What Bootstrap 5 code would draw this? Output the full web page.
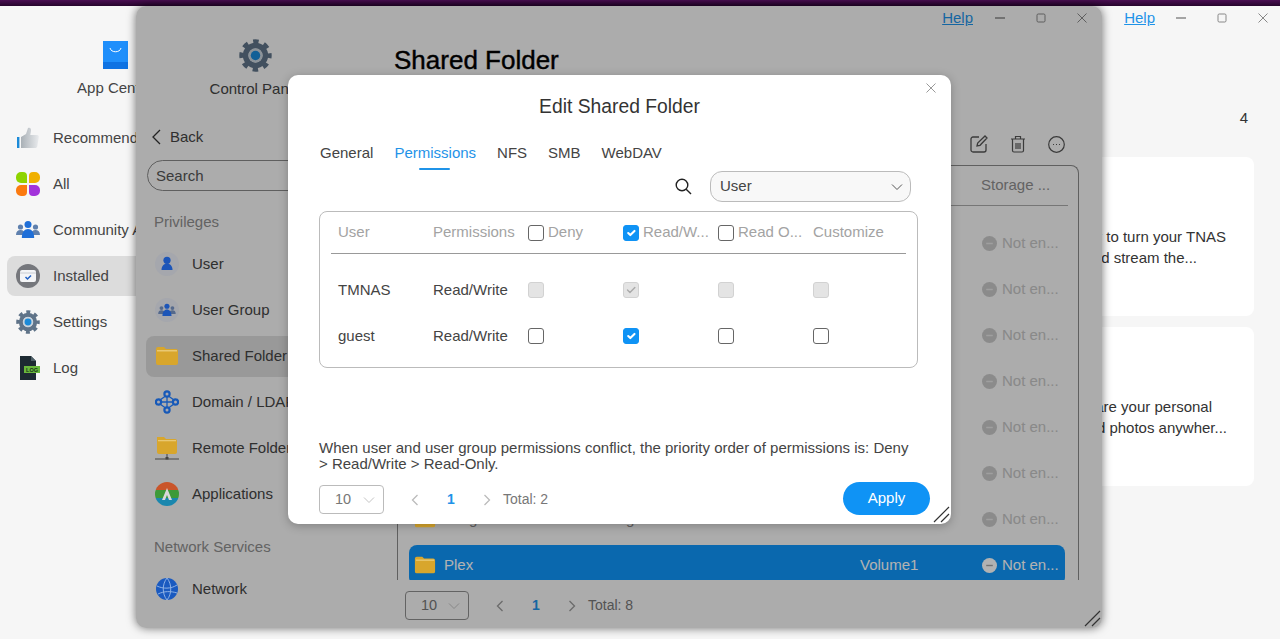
<!DOCTYPE html>
<html lang="en">
<head>
<meta charset="utf-8">
<title>Shared Folder</title>
<link href="https://cdn.jsdelivr.net/npm/bootstrap@5.3.0/dist/css/bootstrap.min.css" rel="stylesheet">
<style>
html,body{height:100%}
body{background:#f6f6f6;overflow:hidden;font-family:"Liberation Sans",Arial,sans-serif;font-size:15px;color:#444}
.top-strip{height:6px;background:linear-gradient(#4a0f52,#26042c)}
.desk-win{position:absolute}
.win-back{left:0;top:6px;width:1280px;height:633px;background:#f6f6f6;border-radius:8px 8px 0 0;overflow:hidden}
.win-front{left:136px;top:6px;width:966px;height:622px;background:#f6f6f6;border-radius:10px;box-shadow:0 0 10px rgba(0,0,0,.55);overflow:hidden}
.win-mask{position:absolute;inset:0;background:rgba(0,0,0,.3);z-index:2}
.ic-lit{position:relative;z-index:3}
.side-back{width:300px;flex:none}
.side-front{width:258px;flex:none}
.head-back{height:109px;padding-top:35px;width:78px;margin-left:76px;gap:9px}
.head-front{height:110px;padding-top:33px;width:90px;margin-left:74px;gap:7px}
.head-back span,.head-front span{white-space:nowrap;line-height:20px}
.ic-store{width:25px;height:28px;flex:none}
.ic-gear{width:33px;height:33px;flex:none}
.nav-item-a{height:40px;margin:3px 0 3px 7px;padding-left:9px;gap:13px;border-radius:8px;white-space:nowrap;color:#444}
.nav-item-b{height:41px;margin:2.5px 0 2.5px 10px;padding-left:9px;gap:13px;border-radius:8px;white-space:nowrap;color:#444;flex:none}
.is-on{background:#dcdcdc}
.ic-24{width:24px;height:24px;flex:none}
.back-row{height:42px;padding-left:16px;gap:9px;color:#444;flex:none}
.search-box{height:31px;width:230px;margin:2px 0 0 11px;border:1px solid #888;border-radius:16px;padding:0 8px;color:#555;background:transparent;line-height:29px;flex:none}
.group-label{height:38px;margin:12px 0 0 18px;line-height:38px;color:#8e8e8e;flex:none}
.group-label.lower{margin-top:11px}
.ctrl{height:24px;line-height:24px}
.help-link{color:#1f93e8;margin-right:6px}
.ctrl-cell{width:41px;height:24px;flex:none;color:#888}
.ctrl-back{margin-right:-3px}
.ctrl-back .help-link{margin-right:5px}
.page-title{font-size:26px;line-height:36px;margin:12px 0 0;color:#000;-webkit-text-stroke:.4px #000;font-weight:400}
.tool-row{height:24px;margin:54px 23px 9px 0;padding-right:14px;gap:21px}
.data-panel{height:415px;margin:0 23px 0 3px;border:1px solid #8a8a8a;border-bottom:0;border-radius:8px 8px 0 0;overflow:hidden}
.panel-head{height:40px;margin:0 10px 0 11px;padding-left:572px;border-bottom:1px solid #aaa;line-height:38px;color:#8e8e8e}
.panel-rows{padding-top:14px}
.data-row{height:40px;margin:3px 13px 3px 11px;padding-left:5px;border-radius:8px;white-space:nowrap;color:#888;flex:none}
.data-row.sel{background:#0f96f9;color:#fff}
.cell-ic{width:22px;height:20px;flex:none;margin-right:8px}
.cell-name{width:157px;flex:none}
.cell-desc{width:259px;flex:none}
.cell-vol{width:122px;flex:none}
.cell-name,.cell-desc,.cell-vol{color:#888}
.sel .cell-name,.sel .cell-vol{color:#fff}
.status-ic{width:15px;height:15px;flex:none;margin-right:5px}
.status-tx{color:#c4c4c4}
.sel .status-tx{color:#fff}
.pager{font-size:14px;color:#777}
.pager .form-select{width:65px;height:29px;padding:0 0 0 15px;font-size:14.5px;line-height:27px;color:#777;background-color:transparent;border:1px solid #bbb;border-radius:4px;box-shadow:none;background-position:right 7px center;background-size:14px 10px;background-image:url("data:image/svg+xml,%3csvg xmlns='http://www.w3.org/2000/svg' viewBox='0 0 14 10'%3e%3cpath fill='none' stroke='%23c4c4c4' d='M2 2.5l5 5 5-5'/%3e%3c/svg%3e")}
.pager .chev{width:16px;height:16px;flex:none}
.pager .chev.first{margin-left:23px}
.pager .pg-num{width:20px;text-align:center;margin-left:18px;font-weight:700;color:#1f93e8}
.pager .chev.next{margin-left:18px}
.pager .pg-total{margin-left:8px}
.pager-win{margin:11px 0 0 11px}
.pager-win .form-select{width:64px;border-color:#8f8f8f;background-color:transparent}
.grip{position:absolute;right:1px;bottom:1px;width:17px;height:17px;z-index:3}
.edit-modal{position:absolute;left:152px;top:69px;width:663px;height:449px;background:#fff;border-radius:10px;z-index:4;box-shadow:0 2px 10px rgba(0,0,0,.25);overflow:hidden}
.modal-x{position:absolute;right:14px;top:7px;width:12px;height:12px;color:#999}
.modal-head{margin:17px 0 0;font-size:19.3px;line-height:30px;color:#333;font-weight:400;text-align:center}
.tab-row{margin:20px 0 0 32px;gap:21px}
.tab-row .nav-link{padding:0;line-height:22px;color:#444;position:relative;height:29px}
.tab-row .nav-link.active{color:#1f93e8}
.tab-row .nav-link.active::after{content:"";position:absolute;left:25px;width:31px;height:2px;top:26px;background:#1f93e8;border-radius:1px}
.filter-row{margin-top:0;padding-right:40px;gap:18px}
.filter-row svg{width:17px;height:17px}
.filter-row .form-select{width:201px;height:31px;padding:0 0 0 9px;font-size:15px;color:#444;background-color:#f8f8f8;border:1px solid #bbb;border-radius:12px;box-shadow:none;background-position:right 6px center;background-size:14px 10px;background-image:url("data:image/svg+xml,%3csvg xmlns='http://www.w3.org/2000/svg' viewBox='0 0 14 10'%3e%3cpath fill='none' stroke='%23555' d='M2 2.5l5 5 5-5'/%3e%3c/svg%3e")}
.perm-box{width:599px;height:157px;margin:9px 0 0 31px;border:1px solid #bbb;border-radius:8px;flex:none}
.perm-head,.perm-row{display:grid;grid-template-columns:repeat(6,95px);align-items:center;white-space:nowrap}
.perm-head{height:42px;margin:0 11px;padding-left:7px;border-bottom:1px solid #999;color:#a3a3a3}
.perm-rows{padding-top:13px}
.perm-row{height:46px;padding-left:18px;color:#444}
.perm-cell{gap:4px;display:flex;align-items:center}
.form-check-input.perm-check{width:16px;height:16px;margin:0;flex:none;border:1px solid #666;border-radius:3px;box-shadow:none;opacity:1}
.form-check-input.perm-check:checked{background-color:#0f93f5;border-color:#0f93f5}
.form-check-input.perm-check:disabled{background-color:#e4e4e4;border-color:#d2d2d2;opacity:1}
.form-check-input.perm-check:disabled:checked{background-image:url("data:image/svg+xml,%3csvg xmlns='http://www.w3.org/2000/svg' viewBox='0 0 20 20'%3e%3cpath fill='none' stroke='%23aaa' stroke-linecap='round' stroke-linejoin='round' stroke-width='2' d='m5 10 3.5 3.5 7-7'/%3e%3c/svg%3e")}
.conflict-note{margin:72px 30px 0 31px;line-height:16px;color:#444;flex:none}
.modal-foot{margin-top:10px;padding:0 21px 0 31px}
.btn-apply{width:87px;height:33px;padding:0;margin-bottom:2px;background:#0f93f5;border:0;color:#fff;font-size:15px}
.count-row{height:24px;margin:76px 32px 27px 0;line-height:24px;color:#333}
.app-tile{margin:0 26px 11px auto;width:160px;height:159px;border:0;border-radius:8px;padding-top:70px;line-height:20.5px;color:#333;text-align:right;white-space:nowrap}
.tile-l1{padding-right:28px}
.tile-l2{padding-right:57px}
.tile-l3{padding-right:42px}
.tile-l4{padding-right:27px}
</style>
</head>
<body>
<svg width="0" height="0" class="d-block">
<defs>
<linearGradient id="g-thumb" x1="0" x2="1"><stop offset="0" stop-color="#a9b0b6"/><stop offset="1" stop-color="#e9ebed"/></linearGradient>
<symbol id="s-gear" viewBox="0 0 32 32"><circle cx="16" cy="16" r="13.2" fill="none" stroke="#5f7388" stroke-width="5" stroke-dasharray="5.18 5.18" stroke-dashoffset="2.59"/><circle cx="16" cy="16" r="9.5" fill="none" stroke="#5f7388" stroke-width="5.5"/><circle cx="16" cy="16" r="7" fill="#c9d3dc"/><circle cx="16" cy="16" r="4.6" fill="#1b8ad8"/></symbol>
<symbol id="s-folder" viewBox="0 0 24 20"><path fill="#d8a62c" d="M1 3a2 2 0 0 1 2-2h6l2 2h10a2 2 0 0 1 2 2v12a2 2 0 0 1-2 2H3a2 2 0 0 1-2-2z"/><path fill="#e9c872" d="M2 4h20v1.500H2z"/></symbol>
<symbol id="s-user" viewBox="0 0 24 24"><circle cx="12" cy="12" r="12" fill="#a5a7ad"/><circle cx="12" cy="8.300" r="3.600" fill="#1c55b8"/><path fill="#1c55b8" d="M6.500 18c0-4 2.500-6.500 5.500-6.500s5.500 2.500 5.500 6.500z"/></symbol>
<symbol id="s-group" viewBox="0 0 24 24"><circle cx="4.500" cy="9" r="2.600" fill="#5f80ae"/><circle cx="19.500" cy="9" r="2.600" fill="#5f80ae"/><path fill="#5f80ae" d="M0 17c0-3.500 1.800-5 4.500-5s4.500 1.500 4.500 5zM15 17c0-3.500 1.800-5 4.500-5s4.500 1.500 4.500 5z"/><circle cx="12" cy="6.500" r="3.500" fill="#1f6fd8"/><path fill="#1f6fd8" d="M5.800 20c0-6 2.800-9 6.200-9s6.200 3 6.200 9z"/></symbol>
<symbol id="s-group-c" viewBox="0 0 24 24"><circle cx="12" cy="12" r="12" fill="#a5a7ad"/><g transform="translate(3.200 3.500) scale(.73)"><circle cx="4.500" cy="9" r="2.600" fill="#54698c"/><circle cx="19.500" cy="9" r="2.600" fill="#54698c"/><path fill="#54698c" d="M0 17c0-3.500 1.800-5 4.500-5s4.500 1.500 4.500 5zM15 17c0-3.500 1.800-5 4.500-5s4.500 1.500 4.500 5z"/><circle cx="12" cy="6.500" r="3.500" fill="#1c55b8"/><path fill="#1c55b8" d="M5.800 20c0-6 2.800-9 6.200-9s6.200 3 6.200 9z"/></g></symbol>
<symbol id="s-thumb" viewBox="0 0 24 24"><rect x="1" y="11" width="2.400" height="11" fill="#1b8ad8"/><path fill="url(#g-thumb)" d="M5 11l5-3 2-6c2-1 3.500.5 3 3l-.7 4H21c1.500 0 2 1 1.800 2.200l-1.500 9c-.2 1.200-1 1.800-2 1.800H5z"/></symbol>
<symbol id="s-all" viewBox="0 0 24 24"><path fill="#8ed400" d="M0 5a5 5 0 0 1 5-5h2a4 4 0 0 1 4 4v7H5a5 5 0 0 1-5-5z"/><path fill="#f0b000" d="M13 4a4 4 0 0 1 4-4h2a5 5 0 0 1 5 5v1a5 5 0 0 1-5 5h-6z"/><path fill="#fb7a10" d="M0 18a5 5 0 0 1 5-5h6v7a4 4 0 0 1-4 4H5a5 5 0 0 1-5-5z"/><path fill="#a233da" d="M13 13h6a5 5 0 0 1 5 5v1a5 5 0 0 1-5 5h-2a4 4 0 0 1-4-4z"/></symbol>
<symbol id="s-inst" viewBox="0 0 24 24"><circle cx="12" cy="12" r="12" fill="#75777c"/><rect x="4" y="6" width="16" height="12" rx="2" fill="#f4f5f7"/><path d="M4 9h16" stroke="#c8ccd2"/><path d="M9.500 13l2 2 3.500-3.500" fill="none" stroke="#2161c4" stroke-width="1.500"/></symbol>
<symbol id="s-log" viewBox="0 0 24 24"><path fill="#1d2a32" d="M4 0h11l5 5v19H4z"/><path fill="#4f6068" d="M15 0l5 5h-5z"/><rect x="8" y="10" width="16" height="7" fill="#69b83c"/><text x="16" y="15.500" font-size="5.500" font-weight="700" text-anchor="middle" fill="#14301a" font-family="Liberation Sans">LOG</text></symbol>
<symbol id="s-domain" viewBox="0 0 24 24"><g fill="none" stroke="#1659b8" stroke-width="2.200"><path d="M12 5v14M6 12h12M12 5L5 10M12 5l7 5M12 19l-7-5M12 19l7-5" stroke-width="1.300"/><circle cx="12" cy="4" r="2.600" fill="#a8a8b0"/><circle cx="12" cy="20" r="2.600" fill="#a8a8b0"/><circle cx="3.500" cy="12" r="2.600" fill="#a8a8b0"/><circle cx="20.500" cy="12" r="2.600" fill="#a8a8b0"/></g></symbol>
<symbol id="s-remote" viewBox="0 0 24 24"><path fill="#d8a62c" d="M2 1h7l2 2h9a2 2 0 0 1 2 2v11a2 2 0 0 1-2 2H4a2 2 0 0 1-2-2z"/><path fill="#e9c872" d="M3 4h18v1.300H3z"/><path stroke="#444" stroke-width="1" d="M12 18v4M0 23h24"/><rect x="10.500" y="21" width="3" height="2.500" fill="#444"/></symbol>
<symbol id="s-apps" viewBox="0 0 24 24"><clipPath id="c-apps"><circle cx="12" cy="12" r="12"/></clipPath><g clip-path="url(#c-apps)"><rect width="24" height="8" fill="#c9552a"/><rect y="8" width="24" height="8" fill="#3d9a38"/><rect y="16" width="24" height="8" fill="#1a87ae"/></g><path d="M7 18l5-12 5 12h-3l-2-5-2 5z" fill="#d8d8d8"/></symbol>
<symbol id="s-net" viewBox="0 0 24 24"><circle cx="12" cy="12" r="11" fill="#1a5ac0"/><path d="M2 9c6 3 14 3 20-1M3 17c6-3 13-3 19-1M12 1c-5 6-5 16 0 22M12 1c5 6 5 16 0 22" fill="none" stroke="#8fb2e4" stroke-width="1"/></symbol>
<symbol id="s-min" viewBox="0 0 12 12"><path d="M1 6h10" stroke="currentColor" stroke-width="1.500"/></symbol>
<symbol id="s-max" viewBox="0 0 12 12"><rect x="2" y="2" width="8" height="8" rx="1.200" fill="none" stroke="currentColor" stroke-width="1"/></symbol>
<symbol id="s-x" viewBox="0 0 12 12"><path d="M1.500 1.500l9 9M10.500 1.500l-9 9" stroke="currentColor" stroke-width="1" fill="none"/></symbol>
<symbol id="s-left" viewBox="0 0 16 16"><path d="M10.500 3l-5 5 5 5" fill="none" stroke="currentColor" stroke-width="1.300"/></symbol>
<symbol id="s-right" viewBox="0 0 16 16"><path d="M5.500 3l5 5-5 5" fill="none" stroke="currentColor" stroke-width="1.300"/></symbol>
<symbol id="s-status" viewBox="0 0 16 16"><circle cx="8" cy="8" r="8" fill="#c8c8c8"/><path d="M4.500 8h7" stroke="#e4e4e4" stroke-width="1.500"/></symbol>
<symbol id="s-status-on" viewBox="0 0 16 16"><circle cx="8" cy="8" r="8" fill="#fff"/><path d="M4.500 8h7" stroke="#a5a5a5" stroke-width="1.500"/></symbol>
<symbol id="s-grip" viewBox="0 0 17 17"><path d="M1 16L16 1M8 16l8-8" stroke="#333" stroke-width="1.200" fill="none"/></symbol>
</defs>
</svg>

<div class="top-strip"></div>

<!-- App Center window -->
<section class="desk-win win-back d-flex">
  <aside class="side-back">
    <div class="head-back d-flex flex-column align-items-center">
      <svg class="ic-store" viewBox="0 0 25 28"><rect width="25" height="28" fill="#1f8ffb"/><rect y="21" width="25" height="7" fill="#0f73e3"/><path d="M7 7c1 5 10 5 11 0" fill="none" stroke="#fff" stroke-width="1"/></svg>
      <span>App Center</span>
    </div>
    <nav class="d-flex flex-column">
      <a class="nav-item-a d-flex align-items-center text-decoration-none"><svg class="ic-24"><use href="#s-thumb"/></svg>Recommend</a>
      <a class="nav-item-a d-flex align-items-center text-decoration-none"><svg class="ic-24"><use href="#s-all"/></svg>All</a>
      <a class="nav-item-a d-flex align-items-center text-decoration-none"><svg class="ic-24"><use href="#s-group"/></svg>Community A</a>
      <a class="nav-item-a is-on d-flex align-items-center text-decoration-none"><svg class="ic-24"><use href="#s-inst"/></svg>Installed</a>
      <a class="nav-item-a d-flex align-items-center text-decoration-none"><svg class="ic-24"><use href="#s-gear"/></svg>Settings</a>
      <a class="nav-item-a d-flex align-items-center text-decoration-none"><svg class="ic-24"><use href="#s-log"/></svg>Log</a>
    </nav>
  </aside>
  <main class="flex-grow-1">
    <div class="ctrl ctrl-back d-flex justify-content-end align-items-center">
      <a href="#" class="help-link">Help</a>
      <span class="ctrl-cell d-flex align-items-center justify-content-center"><svg width="12" height="12"><use href="#s-min"/></svg></span>
      <span class="ctrl-cell d-flex align-items-center justify-content-center"><svg width="12" height="12"><use href="#s-max"/></svg></span>
      <span class="ctrl-cell d-flex align-items-center justify-content-center"><svg width="12" height="12"><use href="#s-x"/></svg></span>
    </div>
    <div class="count-row text-end">4</div>
    <div class="card app-tile">
      <div class="tile-l1">r to turn your TNAS</div>
      <div class="tile-l2">d stream the...</div>
    </div>
    <div class="card app-tile">
      <div class="tile-l3">are your personal</div>
      <div class="tile-l4">d photos anywher...</div>
    </div>
  </main>
</section>

<!-- Control Panel window -->
<section class="desk-win win-front d-flex">
  <aside class="side-front d-flex flex-column">
    <div class="head-front d-flex flex-column align-items-center flex-shrink-0">
      <svg class="ic-gear"><use href="#s-gear"/></svg>
      <span>Control Panel</span>
    </div>
    <div class="back-row d-flex align-items-center"><svg width="9" height="16" viewBox="0 0 9 16"><path d="M8 1L1 8l7 7" fill="none" stroke="#333" stroke-width="1.300"/></svg>Back</div>
    <div class="search-box">Search</div>
    <div class="group-label">Privileges</div>
    <a class="nav-item-b d-flex align-items-center text-decoration-none"><svg class="ic-24 ic-lit"><use href="#s-user"/></svg>User</a>
    <a class="nav-item-b d-flex align-items-center text-decoration-none"><svg class="ic-24 ic-lit"><use href="#s-group-c"/></svg>User Group</a>
    <a class="nav-item-b is-on d-flex align-items-center text-decoration-none"><svg class="ic-24 ic-lit"><use href="#s-folder"/></svg>Shared Folder</a>
    <a class="nav-item-b d-flex align-items-center text-decoration-none"><svg class="ic-24 ic-lit"><use href="#s-domain"/></svg>Domain / LDAP</a>
    <a class="nav-item-b d-flex align-items-center text-decoration-none"><svg class="ic-24 ic-lit"><use href="#s-remote"/></svg>Remote Folder</a>
    <a class="nav-item-b d-flex align-items-center text-decoration-none"><svg class="ic-24 ic-lit"><use href="#s-apps"/></svg>Applications</a>
    <div class="group-label lower">Network Services</div>
    <a class="nav-item-b d-flex align-items-center text-decoration-none"><svg class="ic-24 ic-lit"><use href="#s-net"/></svg>Network</a>
  </aside>
  <main class="flex-grow-1">
    <div class="ctrl d-flex justify-content-end align-items-center">
      <a href="#" class="help-link">Help</a>
      <span class="ctrl-cell d-flex align-items-center justify-content-center"><svg width="12" height="12"><use href="#s-min"/></svg></span>
      <span class="ctrl-cell d-flex align-items-center justify-content-center"><svg width="12" height="12"><use href="#s-max"/></svg></span>
      <span class="ctrl-cell d-flex align-items-center justify-content-center"><svg width="12" height="12"><use href="#s-x"/></svg></span>
    </div>
    <h1 class="page-title">Shared Folder</h1>
    <div class="tool-row d-flex justify-content-end align-items-center">
      <svg width="18" height="18" viewBox="0 0 18 18"><path d="M16 9v6a2 2 0 0 1-2 2H3a2 2 0 0 1-2-2V4a2 2 0 0 1 2-2h6M7 11l.7-3L15 1l2 2-7 7.300z" fill="none" stroke="#555" stroke-width="1.300"/></svg>
      <svg width="18" height="18" viewBox="0 0 18 18"><path d="M2 4h14M6.500 4V1.500h5V4M3.500 4v11.500a1.500 1.500 0 0 0 1.500 1.500h8a1.500 1.500 0 0 0 1.500-1.500V4M7 8v6M9 8v6M11 8v6" fill="none" stroke="#555" stroke-width="1.200"/></svg>
      <svg width="17" height="17" viewBox="0 0 17 17"><circle cx="8.500" cy="8.500" r="7.800" fill="none" stroke="#555" stroke-width="1.200"/><path d="M5 8.500h1M8 8.500h1M11 8.500h1" stroke="#555" stroke-width="1.200"/></svg>
    </div>
    <div class="data-panel">
      <div class="panel-head">Storage ...</div>
      <div class="panel-rows d-flex flex-column">
        <div class="data-row d-flex align-items-center"><svg class="cell-ic ic-lit"><use href="#s-folder"/></svg><span class="cell-name"></span><span class="cell-desc"></span><span class="cell-vol"></span><svg class="status-ic"><use href="#s-status"/></svg><span class="status-tx">Not en...</span></div>
        <div class="data-row d-flex align-items-center"><svg class="cell-ic ic-lit"><use href="#s-folder"/></svg><span class="cell-name"></span><span class="cell-desc"></span><span class="cell-vol"></span><svg class="status-ic"><use href="#s-status"/></svg><span class="status-tx">Not en...</span></div>
        <div class="data-row d-flex align-items-center"><svg class="cell-ic ic-lit"><use href="#s-folder"/></svg><span class="cell-name"></span><span class="cell-desc"></span><span class="cell-vol"></span><svg class="status-ic"><use href="#s-status"/></svg><span class="status-tx">Not en...</span></div>
        <div class="data-row d-flex align-items-center"><svg class="cell-ic ic-lit"><use href="#s-folder"/></svg><span class="cell-name"></span><span class="cell-desc"></span><span class="cell-vol"></span><svg class="status-ic"><use href="#s-status"/></svg><span class="status-tx">Not en...</span></div>
        <div class="data-row d-flex align-items-center"><svg class="cell-ic ic-lit"><use href="#s-folder"/></svg><span class="cell-name"></span><span class="cell-desc"></span><span class="cell-vol"></span><svg class="status-ic"><use href="#s-status"/></svg><span class="status-tx">Not en...</span></div>
        <div class="data-row d-flex align-items-center"><svg class="cell-ic ic-lit"><use href="#s-folder"/></svg><span class="cell-name"></span><span class="cell-desc"></span><span class="cell-vol"></span><svg class="status-ic"><use href="#s-status"/></svg><span class="status-tx">Not en...</span></div>
        <div class="data-row d-flex align-items-center"><svg class="cell-ic ic-lit"><use href="#s-folder"/></svg><span class="cell-name">Images</span><span class="cell-desc">Images</span><span class="cell-vol"></span><svg class="status-ic"><use href="#s-status"/></svg><span class="status-tx">Not en...</span></div>
        <div class="data-row sel d-flex align-items-center"><svg class="cell-ic ic-lit"><use href="#s-folder"/></svg><span class="cell-name">Plex</span><span class="cell-desc"></span><span class="cell-vol">Volume1</span><svg class="status-ic"><use href="#s-status-on"/></svg><span class="status-tx">Not en...</span></div>
      </div>
    </div>
    <div class="pager pager-win d-flex align-items-center">
      <select class="form-select" aria-label="Page size"><option>10</option></select>
      <svg class="chev first" style="color:#999"><use href="#s-left"/></svg>
      <span class="pg-num">1</span>
      <svg class="chev next" style="color:#999"><use href="#s-right"/></svg>
      <span class="pg-total">Total: 8</span>
    </div>
  </main>
  <div class="win-mask"></div>
  <svg class="grip"><use href="#s-grip"/></svg>

  <div class="edit-modal d-flex flex-column">
    <svg class="modal-x"><use href="#s-x"/></svg>
    <h2 class="modal-head">Edit Shared Folder</h2>
    <ul class="nav tab-row">
      <li class="nav-item"><a class="nav-link" href="#">General</a></li>
      <li class="nav-item"><a class="nav-link active" href="#">Permissions</a></li>
      <li class="nav-item"><a class="nav-link" href="#">NFS</a></li>
      <li class="nav-item"><a class="nav-link" href="#">SMB</a></li>
      <li class="nav-item"><a class="nav-link" href="#">WebDAV</a></li>
    </ul>
    <div class="filter-row d-flex justify-content-end align-items-center">
      <svg viewBox="0 0 17 17"><circle cx="7" cy="7" r="5.800" fill="none" stroke="#222" stroke-width="1.400"/><path d="M11.200 11.200l4.800 4.800" stroke="#222" stroke-width="1.400"/></svg>
      <select class="form-select" aria-label="Type"><option>User</option></select>
    </div>
    <div class="perm-box">
      <div class="perm-head">
        <span>User</span><span>Permissions</span>
        <label class="perm-cell"><input class="form-check-input perm-check" type="checkbox">Deny</label>
        <label class="perm-cell"><input class="form-check-input perm-check" type="checkbox" checked>Read/W...</label>
        <label class="perm-cell"><input class="form-check-input perm-check" type="checkbox">Read O...</label>
        <span>Customize</span>
      </div>
      <div class="perm-rows">
        <div class="perm-row">
          <span>TMNAS</span><span>Read/Write</span>
          <span class="perm-cell"><input class="form-check-input perm-check" type="checkbox" disabled></span>
          <span class="perm-cell"><input class="form-check-input perm-check" type="checkbox" checked disabled></span>
          <span class="perm-cell"><input class="form-check-input perm-check" type="checkbox" disabled></span>
          <span class="perm-cell"><input class="form-check-input perm-check" type="checkbox" disabled></span>
        </div>
        <div class="perm-row">
          <span>guest</span><span>Read/Write</span>
          <span class="perm-cell"><input class="form-check-input perm-check" type="checkbox"></span>
          <span class="perm-cell"><input class="form-check-input perm-check" type="checkbox" checked></span>
          <span class="perm-cell"><input class="form-check-input perm-check" type="checkbox"></span>
          <span class="perm-cell"><input class="form-check-input perm-check" type="checkbox"></span>
        </div>
      </div>
    </div>
    <p class="conflict-note mb-0">When user and user group permissions conflict, the priority order of permissions is: Deny &gt; Read/Write &gt; Read-Only.</p>
    <div class="modal-foot d-flex justify-content-between align-items-center">
      <div class="pager d-flex align-items-center">
        <select class="form-select" aria-label="Page size"><option>10</option></select>
        <svg class="chev first" style="color:#bbb"><use href="#s-left"/></svg>
        <span class="pg-num">1</span>
        <svg class="chev next" style="color:#bbb"><use href="#s-right"/></svg>
        <span class="pg-total">Total: 2</span>
      </div>
      <button type="button" class="btn btn-apply rounded-pill">Apply</button>
    </div>
    <svg class="grip"><use href="#s-grip"/></svg>
  </div>
</section>
<script src="https://cdn.jsdelivr.net/npm/bootstrap@5.3.0/dist/js/bootstrap.bundle.min.js"></script>
</body>
</html>
